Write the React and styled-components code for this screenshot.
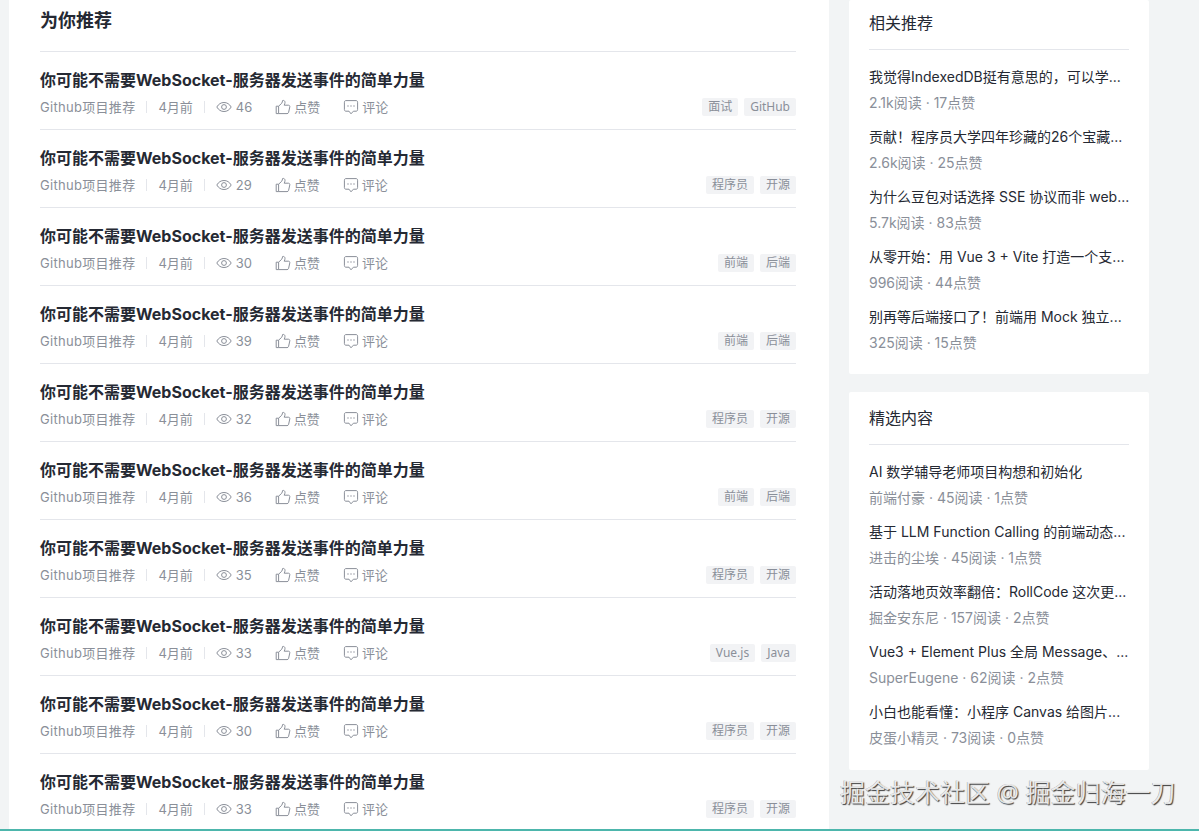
import React from 'react';
import styled, { createGlobalStyle } from 'styled-components';

const GlobalStyle = createGlobalStyle`
	html,
	body {
		margin: 0;
		padding: 0;
		background: #f2f4f5;
		font-family: 'Inter', 'Noto Sans CJK SC', sans-serif;
	}
`;

const Page = styled.div`
	position: relative;
	box-sizing: border-box;
	display: flex;
	align-items: flex-start;
	gap: 20px;
	height: 831px;
	padding: 0 50px 0 9px;
	overflow: hidden;
	border-bottom: 2px solid #4db6ac;
`;

const Main = styled.main`
	flex: none;
	box-sizing: border-box;
	width: 820px;
	padding: 0 33px 0 31px;
	background: #fff;
`;

const Heading = styled.h2`
	margin: 0;
	height: 51px;
	padding-top: 8px;
	box-sizing: border-box;
	font-size: 18px;
	line-height: 26px;
	font-weight: 700;
	color: #252933;
`;

const Row = styled.article`
	box-sizing: border-box;
	height: 78px;
	padding-top: 16px;
	border-top: 1px solid #e4e6eb;
`;

const RowTitle = styled.h3`
	margin: 0;
	font-size: 16px;
	line-height: 24px;
	font-weight: 700;
	color: #252933;
`;

const Meta = styled.div`
	display: flex;
	align-items: center;
	height: 20px;
	margin-top: 5px;
	font-size: 13px;
	line-height: 20px;
	color: #8a8f99;
`;

const Author = styled.span`
	padding-right: 11px;
	letter-spacing: 0.3px;
`;

const Posted = styled.span`
	padding-right: 11px;
`;

const Divider = styled.i`
	width: 1px;
	height: 12px;
	margin-right: 11px;
	background: #e4e6eb;
`;

const Stat = styled.span`
	display: flex;
	align-items: center;
	gap: ${(props) => props.$gap || 3}px;
	margin-right: ${(props) => props.$right || 23}px;
`;

const Tags = styled.div`
	display: flex;
	gap: 6px;
	margin-left: auto;
`;

const Tag = styled.span`
	height: 18px;
	padding: 0 6px;
	border-radius: 2px;
	background: #f2f3f5;
	font-family: 'Noto Sans', 'Noto Sans CJK SC', sans-serif;
	font-size: 12px;
	line-height: 18px;
	color: #8a8f99;
`;

const Side = styled.aside`
	flex: none;
	display: flex;
	flex-direction: column;
	gap: 18px;
	width: 300px;
`;

const Card = styled.section`
	box-sizing: border-box;
	height: ${(props) => props.$height}px;
	padding: 0 20px;
	background: #fff;
	border-radius: 2px;
`;

const CardTitle = styled.h4`
	box-sizing: border-box;
	height: ${(props) => props.$height}px;
	margin: 0;
	padding-bottom: 14px;
	display: flex;
	align-items: flex-end;
	border-bottom: 1px solid #e4e6eb;
	font-size: 16px;
	line-height: 24px;
	font-weight: 400;
	color: #252933;
`;

const Entries = styled.div`
	padding-top: 9px;
`;

const Entry = styled.div`
	height: 60px;
	padding-top: 6px;
	box-sizing: border-box;
`;

const EntryTitle = styled.div`
	font-size: 14px;
	line-height: 24px;
	color: #252933;
	white-space: nowrap;
	overflow: hidden;
`;

const EntryMeta = styled.div`
	margin-top: 2px;
	font-size: 14px;
	line-height: 24px;
	color: #8a8f99;
`;

const Watermark = styled.div`
	position: absolute;
	left: 840px;
	top: 775px;
	font-family: 'Noto Sans', 'Noto Sans CJK SC', sans-serif;
	font-size: 25px;
	line-height: 34px;
	color: rgba(255, 255, 255, 0.85);
	text-shadow: 1px 1px 1px rgba(0, 0, 0, 0.75), -0.5px -0.5px 0 rgba(0, 0, 0, 0.35);
	white-space: nowrap;
`;

const EyeIcon = () => (
	<svg width="16" height="16" viewBox="0 0 16 16" fill="none" stroke="#8a8f99" strokeWidth="1">
		<path d="M0.8 8C2.6 5 5 3.5 8 3.5S13.4 5 15.2 8C13.4 11 11 12.5 8 12.5S2.6 11 0.8 8Z" />
		<circle cx="8" cy="8" r="2.4" />
	</svg>
);

const ThumbIcon = () => (
	<svg width="16" height="16" viewBox="0 0 16 16" fill="none" stroke="#8a8f99" strokeWidth="1">
		<path d="M1.2 7.2H3.6V14.6H1.2Z" />
		<path d="M3.6 7.2L6.6 4.4C7.3 3.6 7.4 2.4 7.6 1.5C8.9 1.1 10 2 10 3.4C10 4.4 9.6 5.3 9.2 6.2H13.4C14.4 6.2 15 7 14.8 7.9L13.6 13.4C13.4 14.2 12.8 14.6 12 14.6H3.6" />
	</svg>
);

const CommentIcon = () => (
	<svg width="16" height="16" viewBox="0 0 16 16" fill="none" stroke="#8a8f99" strokeWidth="1">
		<path d="M3 1.6H13C14 1.6 14.6 2.2 14.6 3.2V10.6C14.6 11.6 14 12.2 13 12.2H10.4L8 14.8L6 12.2H3C2 12.2 1.4 11.6 1.4 10.6V3.2C1.4 2.2 2 1.6 3 1.6Z" />
		<circle cx="5" cy="7" r="0.7" fill="#8a8f99" stroke="none" />
		<circle cx="8" cy="7" r="0.7" fill="#8a8f99" stroke="none" />
		<circle cx="11" cy="7" r="0.7" fill="#8a8f99" stroke="none" />
	</svg>
);

const rows = [
	{ views: 46, tags: ['面试', 'GitHub'] },
	{ views: 29, tags: ['程序员', '开源'] },
	{ views: 30, tags: ['前端', '后端'] },
	{ views: 39, tags: ['前端', '后端'] },
	{ views: 32, tags: ['程序员', '开源'] },
	{ views: 36, tags: ['前端', '后端'] },
	{ views: 35, tags: ['程序员', '开源'] },
	{ views: 33, tags: ['Vue.js', 'Java'] },
	{ views: 30, tags: ['程序员', '开源'] },
	{ views: 33, tags: ['程序员', '开源'] },
];

const related = [
	['我觉得IndexedDB挺有意思的，可以学...', '2.1k阅读 · 17点赞'],
	['贡献！程序员大学四年珍藏的26个宝藏...', '2.6k阅读 · 25点赞'],
	['为什么豆包对话选择 SSE 协议而非 web...', '5.7k阅读 · 83点赞'],
	['从零开始：用 Vue 3 + Vite 打造一个支...', '996阅读 · 44点赞'],
	['别再等后端接口了！前端用 Mock 独立...', '325阅读 · 15点赞'],
];

const picks = [
	['AI 数学辅导老师项目构想和初始化', '前端付豪 · 45阅读 · 1点赞'],
	['基于 LLM Function Calling 的前端动态...', '进击的尘埃 · 45阅读 · 1点赞'],
	['活动落地页效率翻倍：RollCode 这次更...', '掘金安东尼 · 157阅读 · 2点赞'],
	['Vue3 + Element Plus 全局 Message、...', 'SuperEugene · 62阅读 · 2点赞'],
	['小白也能看懂：小程序 Canvas 给图片...', '皮蛋小精灵 · 73阅读 · 0点赞'],
];

const SideCard = ({ title, items, height, titleHeight }) => (
	<Card $height={height}>
		<CardTitle $height={titleHeight}>{title}</CardTitle>
		<Entries>
			{items.map(([name, meta], index) => (
				<Entry key={index}>
					<EntryTitle>{name}</EntryTitle>
					<EntryMeta>{meta}</EntryMeta>
				</Entry>
			))}
		</Entries>
	</Card>
);

const App = () => {
	return (
		<Page>
			<GlobalStyle />
			<Main>
				<Heading>为你推荐</Heading>
				{rows.map((row, index) => (
					<Row key={index}>
						<RowTitle>你可能不需要WebSocket-服务器发送事件的简单力量</RowTitle>
						<Meta>
							<Author>Github项目推荐</Author>
							<Divider />
							<Posted>4月前</Posted>
							<Divider />
							<Stat $gap={4}>
								<EyeIcon />
								{row.views}
							</Stat>
							<Stat>
								<ThumbIcon />
								点赞
							</Stat>
							<Stat>
								<CommentIcon />
								评论
							</Stat>
							<Tags>
								{row.tags.map((tag) => (
									<Tag key={tag}>{tag}</Tag>
								))}
							</Tags>
						</Meta>
					</Row>
				))}
			</Main>
			<Side>
				<SideCard title="相关推荐" items={related} height={374} titleHeight={50} />
				<SideCard title="精选内容" items={picks} height={378} titleHeight={53} />
			</Side>
			<Watermark>掘金技术社区 @ 掘金归海一刀</Watermark>
		</Page>
	);
};

export default App;
